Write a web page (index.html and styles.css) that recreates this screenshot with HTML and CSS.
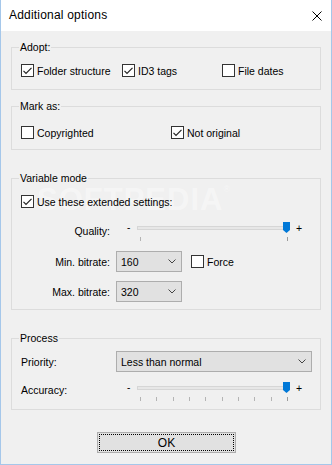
FILE: index.html
```html
<!DOCTYPE html>
<html>
<head>
<meta charset="utf-8">
<link rel="stylesheet" href="styles.css">
</head>
<body>
<div class="window">
  <div class="watermark">SOFTPEDIA<sup>®</sup></div>
  <div class="titlebar">
    <span class="title">Additional options</span>
    <svg class="close" width="10" height="10" viewBox="0 0 10 10"><path d="M0.5 0.5 L9.5 9.5 M9.5 0.5 L0.5 9.5" stroke="#000" stroke-width="1" fill="none"/></svg>
  </div>
  <div class="content">
    <fieldset class="group g-adopt">
      <legend>Adopt:</legend>
      <div class="cbrow adopt-cols">
        <label class="cb"><span class="box"><svg viewBox="0 0 11 11"><path d="M1.5 5.8 L4 8.3 L9.5 2.8"/></svg></span>Folder structure</label>
        <label class="cb"><span class="box"><svg viewBox="0 0 11 11"><path d="M1.5 5.8 L4 8.3 L9.5 2.8"/></svg></span>ID3 tags</label>
        <label class="cb"><span class="box"></span>File dates</label>
      </div>
    </fieldset>

    <fieldset class="group g-mark">
      <legend>Mark as:</legend>
      <div class="cbrow mark-cols">
        <label class="cb"><span class="box"></span>Copyrighted</label>
        <label class="cb"><span class="box"><svg viewBox="0 0 11 11"><path d="M1.5 5.8 L4 8.3 L9.5 2.8"/></svg></span>Not original</label>
      </div>
    </fieldset>

    <fieldset class="group g-var">
      <legend>Variable mode</legend>
      <div class="cbrow">
        <label class="cb"><span class="box"><svg viewBox="0 0 11 11"><path d="M1.5 5.8 L4 8.3 L9.5 2.8"/></svg></span>Use these extended settings:</label>
      </div>
      <div class="frow slider-row first-slider">
        <span class="flabel right lbl-q">Quality:</span>
        <div class="slider">
          <span class="sl-minus">-</span>
          <div class="sl-rail">
            <div class="sl-track"></div>
            <div class="sl-ticks"><i></i><i class="last"></i></div>
            <svg class="sl-thumb" width="7" height="11" viewBox="0 0 7 11"><path d="M0 0 H7 V8 L3.5 11 L0 8 Z" fill="#0078d7"/></svg>
          </div>
          <span class="sl-plus">+</span>
        </div>
      </div>
      <div class="frow gap9">
        <span class="flabel right">Min. bitrate:</span>
        <div class="combo small"><span>160</span><svg width="8" height="5" viewBox="0 0 8 5"><path d="M0.5 0.5 L4 4 L7.5 0.5" stroke="#444" fill="none"/></svg></div>
        <label class="cb force"><span class="box"></span>Force</label>
      </div>
      <div class="frow gap9">
        <span class="flabel right">Max. bitrate:</span>
        <div class="combo small"><span>320</span><svg width="8" height="5" viewBox="0 0 8 5"><path d="M0.5 0.5 L4 4 L7.5 0.5" stroke="#444" fill="none"/></svg></div>
      </div>
    </fieldset>

    <fieldset class="group g-proc">
      <legend>Process</legend>
      <div class="frow">
        <span class="flabel left">Priority:</span>
        <div class="combo wide"><span>Less than normal</span><svg width="8" height="5" viewBox="0 0 8 5"><path d="M0.5 0.5 L4 4 L7.5 0.5" stroke="#444" fill="none"/></svg></div>
      </div>
      <div class="frow slider-row acc-row">
        <span class="flabel left lbl-a">Accuracy:</span>
        <div class="slider">
          <span class="sl-minus">-</span>
          <div class="sl-rail">
            <div class="sl-track"></div>
            <div class="sl-ticks"><i></i><i></i><i></i><i></i><i></i><i></i><i></i><i></i><i></i><i class="last"></i></div>
            <svg class="sl-thumb" width="7" height="11" viewBox="0 0 7 11"><path d="M0 0 H7 V8 L3.5 11 L0 8 Z" fill="#0078d7"/></svg>
          </div>
          <span class="sl-plus">+</span>
        </div>
      </div>
    </fieldset>

    <button class="btn">OK</button>
  </div>
</div>
</body>
</html>
```

FILE: styles.css
```css
* { box-sizing: border-box; }
html, body { margin: 0; padding: 0; }
body {
  width: 332px;
  height: 465px;
  background: #f0f0f0;
  font-family: "Liberation Sans", Arial, sans-serif;
  font-size: 10.5px;
  color: #000;
  overflow: hidden;
}
.window {
  position: relative;
  width: 332px;
  height: 465px;
  border: 1px solid #a5c7ea;
  border-top: none;
  background: #f0f0f0;
  display: flex;
  flex-direction: column;
}
.watermark {
  position: absolute;
  left: 36px;
  top: 182px;
  font-size: 31px;
  font-weight: bold;
  letter-spacing: 1px;
  color: rgba(255, 255, 255, 0.4);
  z-index: 0;
}
.watermark sup { font-size: 9px; font-weight: normal; vertical-align: 18px; }
.titlebar {
  height: 31px;
  background: #fff;
  display: flex;
  align-items: center;
  justify-content: space-between;
  padding: 0 9px 0 8px;
  position: relative;
  z-index: 1;
}
.title {
  font-size: 12px;
  letter-spacing: 0.2px;
  line-height: 31px;
}
.close { display: block; }
.content {
  flex: 1;
  padding: 9px 10px 0;
  display: flex;
  flex-direction: column;
  position: relative;
  z-index: 1;
}
.group {
  margin: 0;
  padding: 0;
  border: 1px solid #dcdcdc;
  min-width: 0;
}
.group legend {
  margin-left: 7px;
  padding: 0 1px;
  line-height: 15px;
}
.g-adopt { padding: 8px 0 11px 0; }
.g-mark { margin-top: 9px; padding: 11px 0 9px 0; }
.g-var { margin-top: 21px; padding: 8px 0 7px 0; }
.g-proc { margin-top: 21px; padding: 5px 0 7px 0; }

.cbrow {
  display: flex;
  padding-left: 9px;
  height: 15px;
}
.adopt-cols .cb:nth-child(1) { width: 101px; }
.adopt-cols .cb:nth-child(2) { width: 100px; }
.mark-cols .cb:nth-child(1) { width: 150px; }

.cb {
  display: inline-flex;
  align-items: center;
  height: 15px;
  white-space: nowrap;
}
.box {
  width: 13px;
  height: 13px;
  border: 1px solid #333;
  background: #fff;
  margin-right: 3px;
  flex-shrink: 0;
  display: flex;
}
.box svg {
  width: 11px;
  height: 11px;
}
.box svg path {
  fill: none;
  stroke: #222;
  stroke-width: 1.2;
}

.frow {
  display: flex;
  align-items: center;
}
.flabel {
  width: 98px;
  margin-right: 6px;
  flex-shrink: 0;
  white-space: nowrap;
}
.flabel.right { text-align: right; }
.flabel.left { padding-left: 9px; }
.gap9 { margin-top: 9px; }

.slider-row { align-items: flex-start; }
.first-slider { margin-top: 13px; }
.acc-row { margin-top: 10px; }
.lbl-q { margin-top: 2px; line-height: 15px; }
.lbl-a { margin-top: 1px; line-height: 15px; }

.slider {
  display: flex;
  height: 20px;
}
.sl-minus {
  width: 21px;
  padding-left: 11px;
  line-height: 12px;
  height: 12px;
  font-size: 10px;
}
.sl-plus {
  margin-left: 6px;
  line-height: 12px;
  height: 12px;
}
.sl-rail {
  position: relative;
  width: 153px;
  height: 20px;
}
.sl-track {
  margin-top: 4px;
  height: 4px;
  background: #e7e7e7;
  border: 1px solid #d6d6d6;
}
.sl-ticks {
  margin-top: 7px;
  display: flex;
  justify-content: space-between;
  padding: 0 2px 0 3px;
}
.sl-ticks i {
  display: block;
  width: 1px;
  height: 4px;
  background: #b4b4b4;
}
.sl-ticks i.last { background: #9a9a9a; }
.sl-thumb {
  position: absolute;
  left: 146px;
  top: 0;
}

.combo {
  height: 21px;
  border: 1px solid #adadad;
  background: #e1e1e1;
  display: flex;
  align-items: center;
  justify-content: space-between;
  padding: 0 5px 0 4px;
  flex-shrink: 0;
}
.combo svg { display: block; }
.combo.small { width: 66px; }
.combo.wide { width: 196px; }
.force { margin-left: 9px; }

.btn {
  align-self: flex-start;
  margin-top: 22px;
  margin-left: 86px;
  width: 139px;
  height: 21px;
  border: 1px solid #adadad;
  background: #e1e1e1;
  font-family: "Liberation Sans", Arial, sans-serif;
  font-size: 12px;
  color: #000;
  padding: 0;
  outline: 1px dotted #000;
  outline-offset: -3px;
  border-radius: 0;
}
```
